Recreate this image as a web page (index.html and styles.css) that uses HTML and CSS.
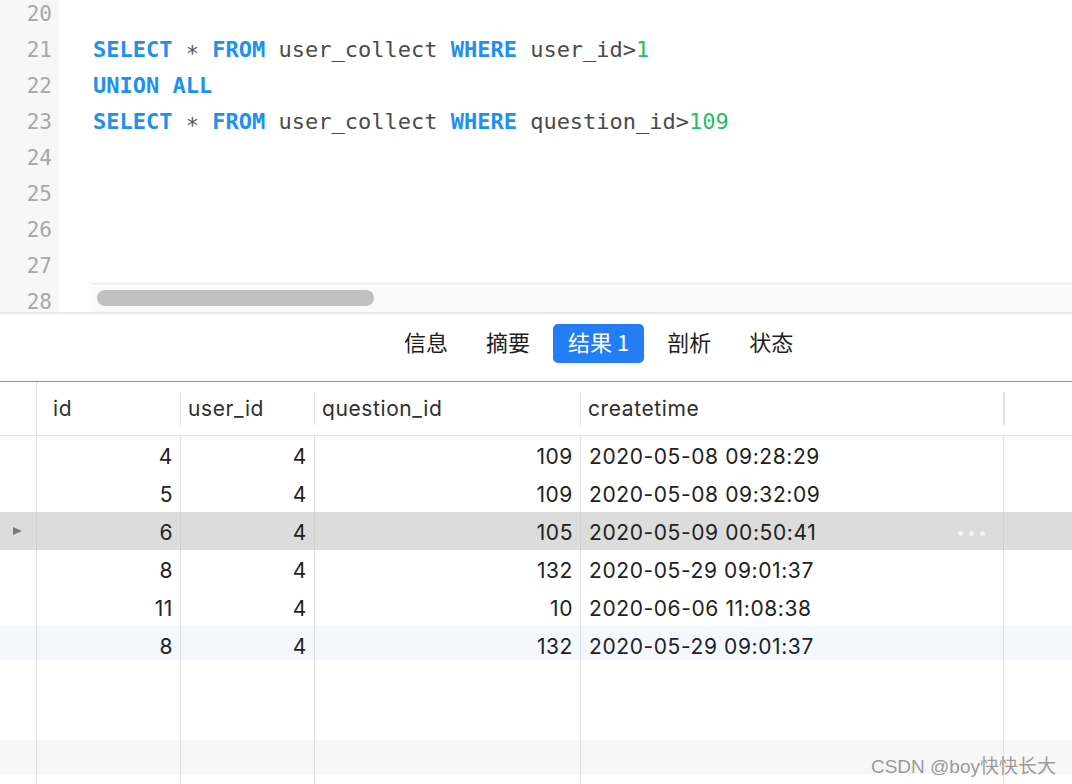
FILE: index.html
```html
<!DOCTYPE html>
<html lang="zh">
<head>
<meta charset="utf-8">
<title>Query</title>
<link rel="stylesheet" href="styles.css">
</head>
<body>
<div class="app">
  <div class="editor">
    <div class="gutter">
      <div class="ln">20</div>
      <div class="ln">21</div>
      <div class="ln">22</div>
      <div class="ln">23</div>
      <div class="ln">24</div>
      <div class="ln">25</div>
      <div class="ln">26</div>
      <div class="ln">27</div>
      <div class="ln">28</div>
    </div>
    <div class="code">
      <div class="line"></div>
      <div class="line"><span class="kw">SELECT</span> <span class="star">*</span> <span class="kw">FROM</span> user_collect <span class="kw">WHERE</span> user_id&gt;<span class="num">1</span></div>
      <div class="line"><span class="kw">UNION ALL</span></div>
      <div class="line"><span class="kw">SELECT</span> <span class="star">*</span> <span class="kw">FROM</span> user_collect <span class="kw">WHERE</span> question_id&gt;<span class="num">109</span></div>
      <div class="line"></div>
      <div class="line"></div>
      <div class="line"></div>
      <div class="line"></div>
      <div class="line"></div>
    </div>
    <div class="hscroll"><div class="thumb"></div></div>
  </div>

  <div class="tabs">
    <div class="tab">信息</div>
    <div class="tab">摘要</div>
    <div class="tab active">结果 1</div>
    <div class="tab">剖析</div>
    <div class="tab">状态</div>
  </div>

  <div class="grid">
    <div class="row head">
      <div class="cell ind"></div>
      <div class="cell h first">id</div>
      <div class="cell h">user_id</div>
      <div class="cell h">question_id</div>
      <div class="cell h">createtime</div>
      <div class="cell h last"></div>
    </div>
    <div class="row">
      <div class="cell ind"></div>
      <div class="cell n">4</div><div class="cell n">4</div><div class="cell n">109</div>
      <div class="cell t">2020-05-08 09:28:29</div><div class="cell last"></div>
    </div>
    <div class="row">
      <div class="cell ind"></div>
      <div class="cell n">5</div><div class="cell n">4</div><div class="cell n">109</div>
      <div class="cell t">2020-05-08 09:32:09</div><div class="cell last"></div>
    </div>
    <div class="row sel">
      <div class="cell ind"><span class="arrow"></span></div>
      <div class="cell n">6</div><div class="cell n">4</div><div class="cell n">105</div>
      <div class="cell t"><span>2020-05-09 00:50:41</span><span class="dots"><i></i><i></i><i></i></span></div><div class="cell last"></div>
    </div>
    <div class="row">
      <div class="cell ind"></div>
      <div class="cell n">8</div><div class="cell n">4</div><div class="cell n">132</div>
      <div class="cell t">2020-05-29 09:01:37</div><div class="cell last"></div>
    </div>
    <div class="row">
      <div class="cell ind"></div>
      <div class="cell n">11</div><div class="cell n">4</div><div class="cell n">10</div>
      <div class="cell t">2020-06-06 11:08:38</div><div class="cell last"></div>
    </div>
    <div class="row new">
      <div class="cell ind"></div>
      <div class="cell n">8</div><div class="cell n">4</div><div class="cell n">132</div>
      <div class="cell t">2020-05-29 09:01:37</div><div class="cell last"></div>
    </div>
    <div class="row empty tall">
      <div class="cell ind"></div><div class="cell"></div><div class="cell"></div><div class="cell"></div><div class="cell"></div><div class="cell last"></div>
    </div>
    <div class="row empty stripe">
      <div class="cell ind"></div><div class="cell"></div><div class="cell"></div><div class="cell"></div><div class="cell"></div><div class="cell last"></div>
    </div>
    <div class="row empty rest">
      <div class="cell ind"></div><div class="cell"></div><div class="cell"></div><div class="cell"></div><div class="cell"></div><div class="cell last"></div>
    </div>
  </div>

  <div class="watermark">CSDN @boy快快长大</div>
</div>
</body>
</html>
```
FILE: styles.css
```css
* { box-sizing: border-box; }
html, body { margin: 0; padding: 0; background: #fff; }
.app {
  position: relative;
  width: 1072px;
  height: 784px;
  overflow: hidden;
  font-family: Inter, "Noto Sans", "Noto Sans CJK SC", sans-serif;
  color: #222;
}

/* editor */
.editor {
  position: relative;
  display: flex;
  height: 312px;
  overflow: hidden;
}
.gutter {
  width: 59px;
  flex: none;
  background: #f7f7f7;
  margin-top: -4px;
  padding-right: 7px;
  text-align: right;
  font-family: "DejaVu Sans Mono", monospace;
  font-size: 21px;
  color: #a8a8a8;
}
.ln { height: 36px; line-height: 36px; }
.code {
  flex: 1;
  margin-top: -4px;
  padding-left: 34px;
  font-family: "DejaVu Sans Mono", monospace;
  font-size: 22px;
  color: #4b4b4b;
}
.line { height: 36px; line-height: 36px; white-space: pre; }
.kw { color: #1e90f0; font-weight: bold; }
.num { color: #1fc065; }
.star { position: relative; top: 4px; color: #555; }
.hscroll {
  position: absolute;
  left: 91px;
  right: 0;
  top: 283px;
  height: 29px;
  background: #fafafa;
  border-top: 1px solid #e9e9e9;
}
.thumb {
  margin: 6px 0 0 6px;
  width: 277px;
  height: 16px;
  border-radius: 8px;
  background: #c1c1c1;
}

/* tabs */
.tabs {
  display: flex;
  align-items: flex-start;
  gap: 8px;
  height: 70px;
  padding: 10px 0 0 389px;
  border-top: 2px solid #e8e8e8;
  border-bottom: 1px solid #8d8d8d;
  font-family: "Noto Sans CJK SC", sans-serif;
  font-size: 22px;
  color: #1e1e1e;
}
.tab {
  height: 39px;
  line-height: 34px;
  padding: 0 15px;
  border-radius: 5px;
}
.tab.active {
  background: #237ef6;
  color: #fff;
}

/* grid */
.grid { display: flex; flex-direction: column; }
.row {
  display: grid;
  grid-template-columns: 37px 144px 134px 266px 423px 1fr;
  height: 38px;
  font-size: 21px;
  letter-spacing: 0.6px;
  line-height: 38px;
  color: #222;
}
.cell {
  border-right: 1px solid #e0e0e0;
  white-space: nowrap;
  overflow: hidden;
}
.cell.last { border-right: none; }
.row.head {
  height: 54px;
  line-height: 53px;
  border-bottom: 1px solid #e2e2e2;
  color: #2e2e2e;
}
.row.head .cell { border-right: none; position: relative; }
.row.head .cell.ind { border-right: 1px solid #e0e0e0; }
.cell.h { padding-left: 7px; }
.cell.h.first { padding-left: 16px; }
.row.head .cell.h::after {
  content: "";
  position: absolute;
  right: 0;
  top: 10px;
  bottom: 10px;
  width: 1px;
  background: #e2e2e2;
}
.row.head .cell.h.last::after { right: auto; left: 0; }
.row.head .cell.h.last { padding: 0; }
.cell.n { text-align: right; padding-right: 7px; padding-top: 2px; }
.cell.t { padding-left: 8px; padding-top: 4px; display: flex; align-items: center; justify-content: space-between; padding-right: 18px; }
.row.sel { background: #dcdcdc; }
.row.sel .cell { border-right-color: #cfcfcf; }
.row.sel .cell.last { border-right: none; }
.row.new { background: linear-gradient(#f4f8fc 34px, transparent 34px); }
.row.tall { height: 76px; }
.row.stripe { height: 34px; background: #f7f7f7; }
.row.rest { height: 60px; }
.cell.ind { display: flex; align-items: center; padding-left: 13px; }
.arrow {
  width: 0;
  height: 0;
  border-left: 9px solid #7a7a7a;
  border-top: 4.5px solid transparent;
  border-bottom: 4.5px solid transparent;
}
.dots { display: flex; gap: 6px; }
.dots i {
  display: block;
  width: 5px;
  height: 5px;
  border-radius: 50%;
  background: #f3f3f3;
}

.watermark {
  position: absolute;
  right: 16px;
  top: 751px;
  font-family: "Liberation Sans", "Noto Sans CJK SC", sans-serif;
  font-size: 19px;
  color: #9a9a9a;
  text-shadow: 0 0 1px rgba(255,255,255,0.8);
}
```
